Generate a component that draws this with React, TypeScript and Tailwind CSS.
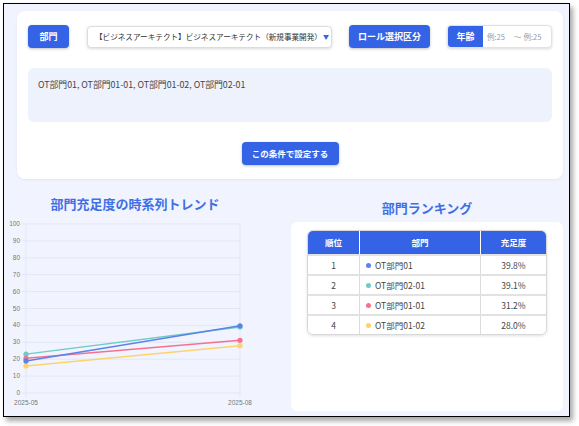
import React from 'react';

const ranking = [
    { rank: 1, name: 'OT部門01', color: '#5b83e8', value: '39.8%' },
    { rank: 2, name: 'OT部門02-01', color: '#6fcbc4', value: '39.1%' },
    { rank: 3, name: 'OT部門01-01', color: '#f5728f', value: '31.2%' },
    { rank: 4, name: 'OT部門01-02', color: '#fcd36c', value: '28.0%' },
];

const series = [
    { color: '#6fcbc4', from: 23, to: 39.1 },
    { color: '#f5728f', from: 20.5, to: 31.2 },
    { color: '#fcd36c', from: 16, to: 28 },
    { color: '#5b83e8', from: 19, to: 39.8 },
];

const X0 = 22;
const X1 = 236;
const Y0 = 179;
const Y100 = 10;
const yOf = (v: number) => Y0 - ((Y0 - Y100) * v) / 100;

const TrendChart = () => (
    <svg width="287" height="200" viewBox="0 0 287 200" className="block">
        {[0, 10, 20, 30, 40, 50, 60, 70, 80, 90, 100].map((v) => (
            <g key={v}>
                <line x1={X0 - 4} x2={X1} y1={yOf(v)} y2={yOf(v)} stroke="#e3e7f3" strokeWidth="1" />
                <text x={X0 - 6} y={yOf(v) + 2} textAnchor="end" fontSize="6.5" fill="#777" fontFamily="Liberation Sans, sans-serif">
                    {v}
                </text>
            </g>
        ))}
        <line x1={X0} x2={X0} y1={Y100} y2={Y0 + 4} stroke="#e3e7f3" strokeWidth="1" />
        <line x1={X1} x2={X1} y1={Y100} y2={Y0 + 4} stroke="#e3e7f3" strokeWidth="1" />
        <text x={X0} y={Y0 + 12} textAnchor="middle" fontSize="6.5" fill="#777" fontFamily="Liberation Sans, sans-serif">2025-05</text>
        <text x={X1} y={Y0 + 12} textAnchor="middle" fontSize="6.5" fill="#777" fontFamily="Liberation Sans, sans-serif">2025-08</text>
        {series.map((s, i) => (
            <g key={i}>
                <line x1={X0} y1={yOf(s.from)} x2={X1} y2={yOf(s.to)} stroke={s.color} strokeWidth="1.5" />
                <circle cx={X0} cy={yOf(s.from)} r="2.6" fill={s.color} />
                <circle cx={X1} cy={yOf(s.to)} r="2.6" fill={s.color} />
            </g>
        ))}
    </svg>
);

const App = () => {
    return (
        <div className="w-[579px] h-[426px] bg-white pt-[3px] pl-[3px]" style={{ fontFamily: '"Noto Sans CJK JP", "Noto Sans", sans-serif' }}>
            <div className="w-[567px] h-[414px] border border-black bg-[#f1f4fe] overflow-hidden shadow-[3px_4px_5px_rgba(0,0,0,0.35)]">
                {/* filter card */}
                <div className="mt-[7px] ml-[13px] w-[546px] h-[168px] bg-white rounded-lg shadow-[0_1px_3px_rgba(0,0,0,0.06)] pt-[14px] px-[11px]">
                    <div className="flex items-center h-[23px]">
                        <div className="w-[41px] h-[23px] rounded bg-[#3563e6] text-white text-[9px] font-bold flex items-center justify-center shadow-[0_1px_3px_rgba(0,0,0,0.25)]">部門</div>
                        <div className="ml-[18px] w-[245px] h-[22px] rounded border border-[#dcdcdc] bg-white shadow-[0_1px_3px_rgba(0,0,0,0.15)] flex items-center pl-[7px] pr-[2px] text-[7.6px] text-[#333]">
                            <span className="flex-1 whitespace-nowrap overflow-hidden">【ビジネスアーキテクト】ビジネスアーキテクト（新規事業開発）</span>
                            <span className="text-[#3563e6] text-[6px]">▼</span>
                        </div>
                        <div className="ml-[17px] w-[81px] h-[23px] rounded bg-[#3563e6] text-white text-[9px] font-bold flex items-center justify-center shadow-[0_1px_3px_rgba(0,0,0,0.25)]">ロール選択区分</div>
                        <div className="ml-[17px] w-[105px] h-[23px] rounded border border-[#e2e2e2] bg-white flex items-center overflow-hidden shadow-[0_1px_3px_rgba(0,0,0,0.15)]">
                            <div className="w-[35px] h-full bg-[#3563e6] text-white text-[9px] font-bold flex items-center justify-center">年齢</div>
                            <span className="ml-[4px] text-[7.5px] text-[#999] whitespace-nowrap">例:25</span>
                            <span className="ml-[9px] text-[7.5px] text-[#999]">〜</span>
                            <span className="ml-[2px] text-[7.5px] text-[#999] whitespace-nowrap">例:25</span>
                        </div>
                    </div>
                    <div className="mt-[20px] h-[54px] rounded-md bg-[#eef2fd] pt-[10px] pl-[10px] text-[8.8px] text-[#444]">
                        OT部門01, OT部門01-01, OT部門01-02, OT部門02-01
                    </div>
                    <div className="mt-[20px] flex justify-center">
                        <div className="w-[97px] h-[23px] rounded bg-[#3563e6] text-white text-[8.5px] font-bold flex items-center justify-center shadow-[0_1px_3px_rgba(0,0,0,0.25)]">この条件で設定する</div>
                    </div>
                </div>

                {/* bottom */}
                <div className="flex">
                    <div className="w-[287px]">
                        <div className="mt-[15px] w-[262px] h-[20px] flex items-center justify-center text-[13px] font-bold text-[#3f6fe4]">部門充足度の時系列トレンド</div>
                        <TrendChart />
                    </div>
                    <div className="w-[272px]">
                        <div className="mt-[19px] h-[20px] flex items-center justify-center text-[13px] font-bold text-[#3f6fe4]">部門ランキング</div>
                        <div className="mt-[4px] h-[189px] bg-white rounded-md pt-[8px] px-[16px]">
                            <div className="w-[240px] rounded-md border border-[#d8d8d8] overflow-hidden shadow-[0_1px_3px_rgba(0,0,0,0.12)]">
                                <div className="flex h-[23px] bg-[#3563e6] text-white text-[8.5px] font-bold">
                                    <div className="w-[52px] flex items-center justify-center border-r border-white">順位</div>
                                    <div className="w-[121px] flex items-center justify-center border-r border-white">部門</div>
                                    <div className="flex-1 flex items-center justify-center">充足度</div>
                                </div>
                                {ranking.map((r) => (
                                    <div key={r.rank} className="flex h-[20px] border-t-2 border-[#e2e2e2] text-[8.5px] text-[#444]">
                                        <div className="w-[52px] flex items-center justify-center border-r border-[#dcdcdc]">{r.rank}</div>
                                        <div className="w-[121px] flex items-center pl-[6px] border-r border-[#dcdcdc]">
                                            <span className="w-[5px] h-[5px] rounded-full mr-[4px]" style={{ backgroundColor: r.color }}></span>
                                            {r.name}
                                        </div>
                                        <div className="flex-1 flex items-center justify-center">{r.value}</div>
                                    </div>
                                ))}
                            </div>
                        </div>
                    </div>
                </div>
            </div>
        </div>
    );
};

export default App;
